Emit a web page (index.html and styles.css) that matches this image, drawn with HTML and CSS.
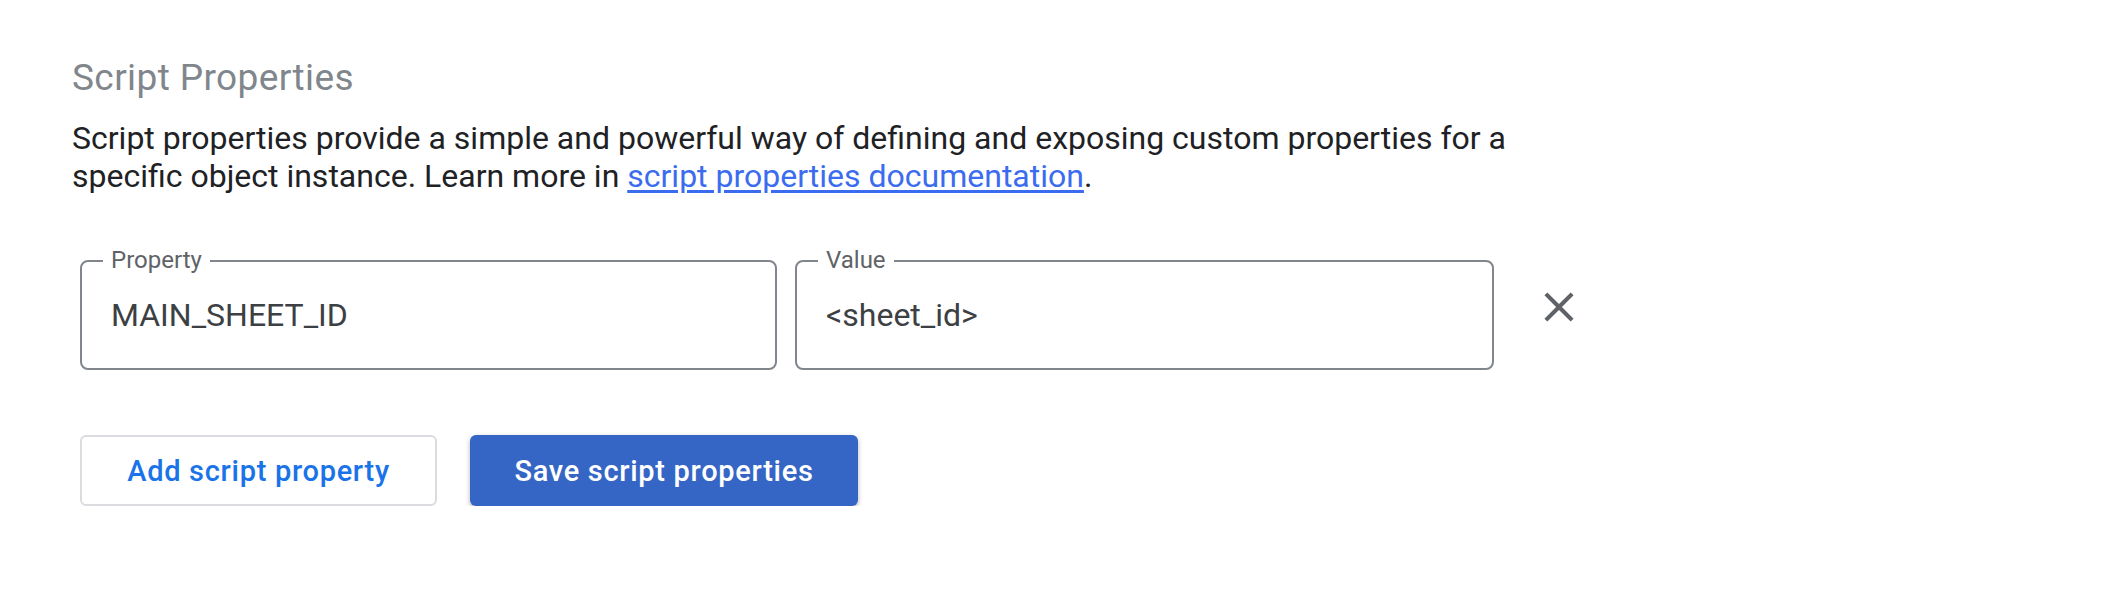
FILE: index.html
```html
<!DOCTYPE html>
<html lang="en">
<head>
<meta charset="utf-8">
<title>Script Properties</title>
<link rel="stylesheet" href="styles.css">
</head>
<body>
<section class="panel">
  <h2 class="title">Script Properties</h2>
  <p class="desc">Script properties provide a simple and powerful way of defining and exposing custom properties for a specific object instance. Learn more in <a class="link" href="#">script properties documentation</a>.</p>

  <div class="prop-row">
    <div class="field field-prop">
      <span class="field-label">Property</span>
      <span class="field-value">MAIN_SHEET_ID</span>
    </div>
    <div class="field field-val">
      <span class="field-label">Value</span>
      <span class="field-value">&lt;sheet_id&gt;</span>
    </div>
    <button class="icon-btn" aria-label="Remove">
      <svg viewBox="0 0 24 24" width="50" height="50"><path d="M19 6.41 17.59 5 12 10.59 6.41 5 5 6.41 10.59 12 5 17.59 6.41 19 12 13.41 17.59 19 19 17.59 13.41 12z" fill="#5f6368"/></svg>
    </button>
  </div>

  <div class="actions">
    <button class="btn btn-outline">Add script property</button>
    <button class="btn btn-primary">Save script properties</button>
  </div>
</section>
</body>
</html>
```
FILE: styles.css
```css
html, body {
  margin: 0;
  padding: 0;
  background: #ffffff;
}

.panel {
  padding: 56px 0 0 72px;
  font-family: Roboto, "Liberation Sans", Arial, sans-serif;
}

.title {
  margin: 0;
  font-size: 37px;
  line-height: 44px;
  font-weight: 400;
  color: #80868b;
  letter-spacing: 0.4px;
}

.desc {
  margin: 19px 0 0 0;
  max-width: 1470px;
  font-size: 32px;
  line-height: 38px;
  color: #202124;
}

.link {
  color: #3b6cf0;
  text-decoration: underline;
  text-underline-offset: 3px;
}

.prop-row {
  display: flex;
  align-items: flex-start;
  gap: 18px;
  margin: 65px 0 0 8px;
}

.field {
  position: relative;
  box-sizing: border-box;
  height: 110px;
  border: 2px solid #80868b;
  border-radius: 8px;
  display: flex;
  align-items: center;
  padding: 0 29px;
}

.field-prop { width: 697px; }
.field-val { width: 699px; }

.field-label {
  position: absolute;
  top: -14px;
  left: 21px;
  padding: 0 8px;
  background: #ffffff;
  font-size: 24px;
  line-height: 24px;
  color: #5f6368;
}

.field-value {
  font-size: 32px;
  line-height: 40px;
  color: #3c4043;
}

.icon-btn {
  margin: 22px 0 0 22px;
  padding: 0;
  border: none;
  background: none;
  width: 50px;
  height: 50px;
  display: flex;
}

.actions {
  display: flex;
  gap: 33px;
  margin: 65px 0 0 8px;
}

.btn {
  box-sizing: border-box;
  height: 71px;
  border-radius: 6px;
  font-family: Roboto, "Liberation Sans", Arial, sans-serif;
  font-size: 29px;
  font-weight: 500;
  letter-spacing: 0.7px;
  padding: 0;
  cursor: pointer;
}

.btn-outline {
  width: 357px;
  background: #ffffff;
  border: 2px solid #dadce0;
  color: #1a73e8;
}

.btn-primary {
  width: 388px;
  background: #3566c5;
  border: none;
  color: #ffffff;
  box-shadow: 0 2px 5px rgba(0, 0, 0, 0.3);
}
```
